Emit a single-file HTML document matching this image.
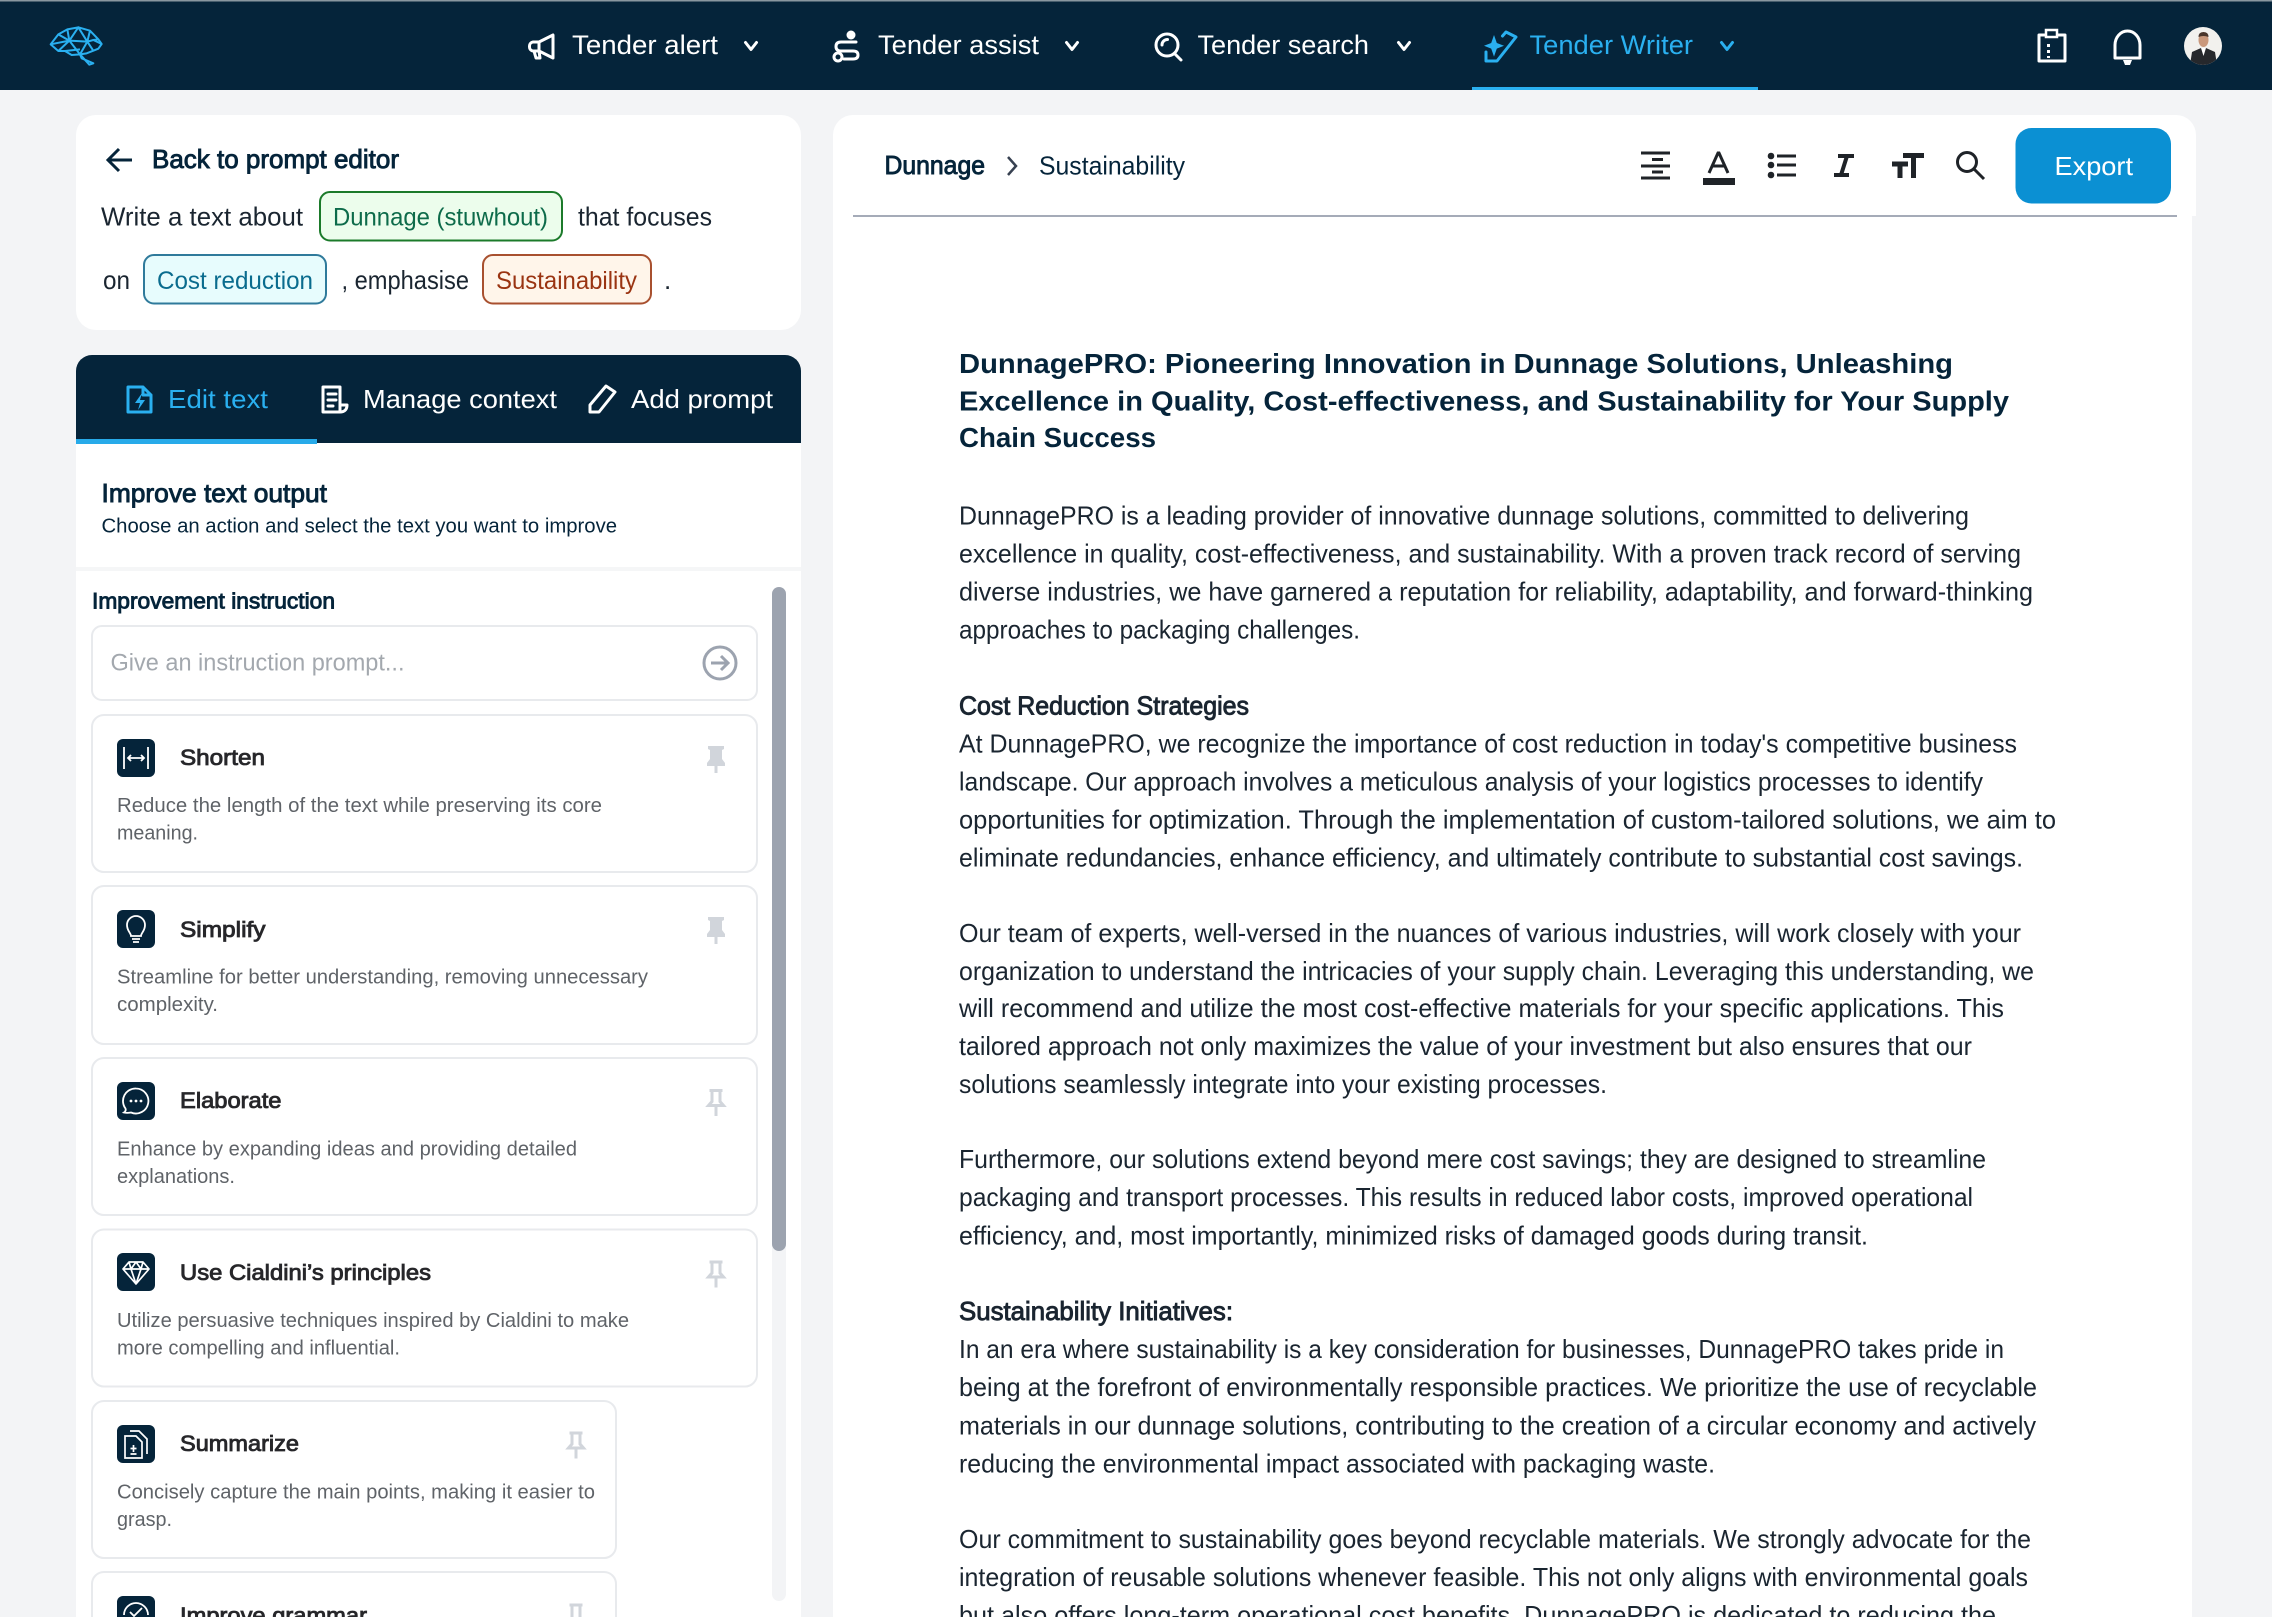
<!DOCTYPE html>
<html lang="en"><head><meta charset="utf-8"><title>Tender Writer</title>
<style>
html,body{margin:0;padding:0;background:#f3f4f6;overflow:hidden}
svg{display:block}
text{font-family:"Liberation Sans",sans-serif}
.b{font-size:26px;fill:#1a2530}
.m{stroke:currentColor;stroke-width:.9}
.d{font-size:20px;fill:#5f6368}
.t{font-size:22px;fill:#27272a;stroke:#27272a;stroke-width:.85}
.n{font-size:27px;fill:#fff}
.ic{fill:none;stroke:#fff;stroke-width:3;stroke-linejoin:round;stroke-linecap:round}
.bl{fill:none;stroke:#2ab0f0;stroke-width:3;stroke-linejoin:round;stroke-linecap:round}
.pin{fill:#d1d5db}
.pino{fill:none;stroke:#d1d5db;stroke-width:3}
.card{fill:#fff;stroke:#e8eaed;stroke-width:2}
.tb{fill:none;stroke:#1f2328;stroke-width:3}
</style></head><body>
<svg width="2272" height="1617" viewBox="0 0 2272 1617" xmlns="http://www.w3.org/2000/svg">
<defs><clipPath id="av"><circle cx="2203" cy="46" r="19"/></clipPath></defs>
<rect width="2272" height="1617" fill="#f3f4f6"/>
<!-- header -->
<rect width="2272" height="90" fill="#05243a"/>
<rect width="2272" height="1.500" fill="#8a97a0"/>
<g transform="translate(30 0) scale(.3333)" fill="none" stroke="#2ab0f0" stroke-width="6" stroke-linejoin="round">
<path d="M62 133L85 103L112 88L145 82L180 92L205 118L215 132L205 146L190 152L170 160L150 163L155 175L190 190L178 194L150 163L125 165L105 153L85 153Z"/>
<path d="M62 133L118 122L85 103M118 122L112 88M118 122L145 82L172 125L180 92M118 122L172 125L190 120L205 118M118 122L150 163L172 125L190 152M118 122L85 153M190 120L215 132M105 153L150 148"/>
</g>
<path class="ic" d="M533 42h6l14-7v23l-14-7h-6a4 4 0 0 1-3.500-4v-1a4 4 0 0 1 3.500-4zM539 42v9M534 51l2 7h4l-1-7"/>
<text class="n" x="572" y="54" textLength="146" lengthAdjust="spacingAndGlyphs">Tender alert</text>
<path class="ic" stroke-width="2.600" d="M745.500 42.500l5.500 7 5.500-7"/>
<circle cx="851" cy="35" r="4.500" fill="#fff"/><circle cx="838" cy="57" r="4" class="ic"/>
<path class="ic" d="M856 42h-15q-5 0-5 4.500t5 4.500h12q5 0 5 4t-5 4h-9"/>
<text class="n" x="878" y="54" textLength="161" lengthAdjust="spacingAndGlyphs">Tender assist</text>
<path class="ic" stroke-width="2.600" d="M1066.500 42.500l5.500 7 5.500-7"/>
<circle class="ic" cx="1167" cy="45" r="11"/><path class="ic" d="M1175 54l6 6M1162 45a5.500 5.500 0 0 1 5.500-5.500"/>
<text class="n" x="1197.500" y="54" textLength="171.500" lengthAdjust="spacingAndGlyphs">Tender search</text>
<path class="ic" stroke-width="2.600" d="M1398.500 42.500l5.500 7 5.500-7"/>
<path class="bl" d="M1486 52v9h11l19-24-10-5-3.500 4"/>
<path d="M1494 35l2.800 8 7.200 2.800-7.200 2.800-2.800 8-2.800-8-7.200-2.800 7.200-2.800z" fill="#2ab0f0"/>
<text class="n" style="fill:#2ab0f0" x="1529.500" y="54" textLength="163.500" lengthAdjust="spacingAndGlyphs">Tender Writer</text>
<path class="bl" stroke-width="2.600" d="M1721.500 42.500l5.500 7 5.500-7"/>
<rect x="1472" y="87" width="286" height="3" fill="#2ab0f0"/>
<rect class="ic" x="2039" y="35" width="26" height="26"/><rect x="2046" y="30" width="11" height="7" fill="#05243a" stroke="#fff" stroke-width="2.500"/>
<path d="M2047 44h3v3h-3zM2047 50h3v3h-3zM2047 56h3v2h-3z" fill="#fff"/>
<path class="ic" d="M2115 58V45a12.500 14 0 0 1 25 0V58z"/><path d="M2123 60h9l-2 5h-5z" fill="#fff"/>
<g clip-path="url(#av)"><rect x="2184" y="27" width="38" height="38" fill="#f2f1ee"/>
<path d="M2190 65l2-13 9-4h5l9 4 2 13z" fill="#26282c"/><path d="M2201 48l2.500 8 2.500-8z" fill="#fff"/>
<ellipse cx="2203.500" cy="40" rx="5" ry="7" fill="#c9987c"/><path d="M2198.500 37q0-5 5-5t5 5q-5-2-10 0z" fill="#4a362c"/></g>
<!-- prompt card -->
<rect x="76" y="115" width="725" height="215" rx="20" fill="#fff"/>
<path d="M132 160H109M119 149l-11 11 11 11" fill="none" stroke="#05243a" stroke-width="3"/>
<text x="152" y="168" font-size="26" fill="#05243a" style="color:#05243a" class="m" textLength="247" lengthAdjust="spacingAndGlyphs">Back to prompt editor</text>
<text class="b" x="101" y="225.500" textLength="202" lengthAdjust="spacingAndGlyphs">Write a text about</text>
<rect x="320" y="192" width="242" height="48.500" rx="10" fill="#ecfdec" stroke="#1b7a2a" stroke-width="2"/>
<text x="333" y="225.500" font-size="25" fill="#0d6b4a" textLength="215" lengthAdjust="spacingAndGlyphs">Dunnage (stuwhout)</text>
<text class="b" x="578" y="225.500" textLength="134" lengthAdjust="spacingAndGlyphs">that focuses</text>
<text class="b" x="103" y="289" textLength="27" lengthAdjust="spacingAndGlyphs">on</text>
<rect x="144" y="255" width="182" height="48.500" rx="10" fill="#e7fcfd" stroke="#2f7a9b" stroke-width="2"/>
<text x="157" y="289" font-size="25" fill="#0a6c8e" textLength="156" lengthAdjust="spacingAndGlyphs">Cost reduction</text>
<text class="b" x="341.500" y="289" textLength="127.500" lengthAdjust="spacingAndGlyphs">, emphasise</text>
<rect x="483" y="255" width="168" height="48.500" rx="10" fill="#fff5ea" stroke="#a8502f" stroke-width="2"/>
<text x="496" y="289" font-size="25" fill="#9a3412" textLength="141" lengthAdjust="spacingAndGlyphs">Sustainability</text>
<text class="b" x="664" y="289">.</text>
<!-- tabs panel -->
<rect x="76" y="420" width="725" height="1197" fill="#fff"/>
<path d="M76 443V371a16 16 0 0 1 16-16H785a16 16 0 0 1 16 16V443z" fill="#05243a"/>
<rect x="76" y="439" width="241" height="5" fill="#27aae9"/>
<path class="bl" d="M128 387h15l8 8v17h-23zM143 387v8h8"/><path d="M142 393l-7 10h5l-2 7 7-10h-5z" fill="#2ab0f0"/>
<text x="168" y="408" font-size="26" fill="#2ab0f0" textLength="100" lengthAdjust="spacingAndGlyphs">Edit text</text>
<path class="ic" d="M323 387h17v25h-17zM340 405h7c0 4-2 7-7 7M328 394h8M328 400h8M328 406h5"/>
<text x="363" y="408" font-size="26" fill="#fff" textLength="194" lengthAdjust="spacingAndGlyphs">Manage context</text>
<path class="ic" d="M590 412v-7l16-19 9 6-16 20z"/>
<text x="631" y="408" font-size="26" fill="#fff" textLength="142" lengthAdjust="spacingAndGlyphs">Add prompt</text>
<text x="101.500" y="502" font-size="26" fill="#05243a" style="color:#05243a" class="m" textLength="225.500" lengthAdjust="spacingAndGlyphs">Improve text output</text>
<text x="101.500" y="532.500" font-size="20" fill="#05243a" textLength="515.500" lengthAdjust="spacingAndGlyphs">Choose an action and select the text you want to improve</text>
<rect x="76" y="567" width="725" height="4" fill="#f5f6f7"/>
<text x="92" y="608.500" font-size="22" fill="#05243a" style="color:#05243a" class="m" textLength="243" lengthAdjust="spacingAndGlyphs">Improvement instruction</text>
<rect x="772" y="587" width="14" height="1014" rx="7" fill="#f3f4f6"/>
<rect x="772" y="587" width="14" height="664" rx="7" fill="#9ca3af"/>
<rect class="card" x="92" y="626" width="665" height="74" rx="10"/>
<text x="110.500" y="670.500" font-size="24" fill="#a3a8ae" textLength="294" lengthAdjust="spacingAndGlyphs">Give an instruction prompt...</text>
<circle cx="720" cy="663" r="16" fill="none" stroke="#9ca3af" stroke-width="3"/>
<path d="M711 663h17M721 656l7 7-7 7" fill="none" stroke="#9ca3af" stroke-width="3"/>
<!-- cards -->
<rect class="card" x="92" y="715" width="665" height="157" rx="12"/>
<rect x="117" y="739" width="38" height="38" rx="6" fill="#05243a"/>
<path d="M124 747v22M148 747v22" stroke="#fff" stroke-width="1.800"/><path d="M128 758h16M131 755l-3 3 3 3M141 755l3 3-3 3" fill="none" stroke="#fff" stroke-width="1.800"/>
<text class="t" x="180" y="765" textLength="85" lengthAdjust="spacingAndGlyphs">Shorten</text>
<path class="pin" d="M708 746h16v3l-2 1v9l3 4v3h-7.500v7h-3v-7h-7.500v-3l3-4v-9l-2-1z"/>
<text class="d" x="117" y="812" textLength="485" lengthAdjust="spacingAndGlyphs">Reduce the length of the text while preserving its core</text>
<text class="d" x="117" y="839.500" textLength="81" lengthAdjust="spacingAndGlyphs">meaning.</text>

<rect class="card" x="92" y="886" width="665" height="158" rx="12"/>
<rect x="117" y="910" width="38" height="38" rx="6" fill="#05243a"/>
<path d="M131 936c0-3-4-5-4-11a9 9 0 0 1 18 0c0 6-4 8-4 11z" fill="none" stroke="#fff" stroke-width="1.800"/><path d="M132 939h8M133 942h6" stroke="#fff" stroke-width="1.800"/>
<text class="t" x="180" y="937" textLength="85.500" lengthAdjust="spacingAndGlyphs">Simplify</text>
<path class="pin" d="M708 917h16v3l-2 1v9l3 4v3h-7.500v7h-3v-7h-7.500v-3l3-4v-9l-2-1z"/>
<text class="d" x="117" y="983.500" textLength="531" lengthAdjust="spacingAndGlyphs">Streamline for better understanding, removing unnecessary</text>
<text class="d" x="117" y="1011" textLength="101" lengthAdjust="spacingAndGlyphs">complexity.</text>

<rect class="card" x="92" y="1058" width="665" height="157" rx="12"/>
<rect x="117" y="1082" width="38" height="38" rx="6" fill="#05243a"/>
<path d="M136 1088.500a12.500 12.500 0 1 1-5 24c-3 .5-5 .5-7 0 1.500-1 2-2.500 1.500-4a12.500 12.500 0 0 1 10.500-20z" fill="none" stroke="#fff" stroke-width="1.800"/><circle cx="131" cy="1101" r="1.400" fill="#fff"/><circle cx="136" cy="1101" r="1.400" fill="#fff"/><circle cx="141" cy="1101" r="1.400" fill="#fff"/>
<text class="t" x="180" y="1108" textLength="101.500" lengthAdjust="spacingAndGlyphs">Elaborate</text>
<path class="pino" d="M709.500 1090.500h13M712 1090.500v11l-3.500 4h15l-3.500-4v-11M716 1105.500v10.500"/>
<text class="d" x="117" y="1155.500" textLength="460" lengthAdjust="spacingAndGlyphs">Enhance by expanding ideas and providing detailed</text>
<text class="d" x="117" y="1183" textLength="118" lengthAdjust="spacingAndGlyphs">explanations.</text>

<rect class="card" x="92" y="1229.500" width="665" height="157" rx="12"/>
<rect x="117" y="1253" width="38" height="38" rx="6" fill="#05243a"/>
<path d="M129 1262h14l6 7-13 15-13-15zM123 1269h26M131 1269l5 15 5-15M129 1262l2 7 5-7 5 7 2-7" fill="none" stroke="#fff" stroke-width="1.700" stroke-linejoin="round"/>
<text class="t" x="180" y="1280" textLength="251" lengthAdjust="spacingAndGlyphs">Use Cialdini’s principles</text>
<path class="pino" d="M709.500 1262h13M712 1262v11l-3.500 4h15l-3.500-4v-11M716 1277v10.500"/>
<text class="d" x="117" y="1327" textLength="512" lengthAdjust="spacingAndGlyphs">Utilize persuasive techniques inspired by Cialdini to make</text>
<text class="d" x="117" y="1354.500" textLength="283" lengthAdjust="spacingAndGlyphs">more compelling and influential.</text>

<rect class="card" x="92" y="1401" width="524" height="157" rx="12"/>
<rect x="117" y="1425" width="38" height="38" rx="6" fill="#05243a"/>
<path d="M125 1436h11l6 6v16h-17zM130 1431h9l8 8v15M133.500 1445v7M130.500 1448.500h6M130.500 1454h6" fill="none" stroke="#fff" stroke-width="1.700"/>
<text class="t" x="180" y="1451" textLength="119" lengthAdjust="spacingAndGlyphs">Summarize</text>
<path class="pino" d="M569.500 1433h13M572 1433v11l-3.500 4h15l-3.500-4v-11M576 1448v10.500"/>
<text class="d" x="117" y="1498.500" textLength="478" lengthAdjust="spacingAndGlyphs">Concisely capture the main points, making it easier to</text>
<text class="d" x="117" y="1526" textLength="55" lengthAdjust="spacingAndGlyphs">grasp.</text>

<path class="card" d="M92 1617V1584a12 12 0 0 1 12-12H604a12 12 0 0 1 12 12V1617"/>
<path d="M117 1617V1602a6 6 0 0 1 6-6h26a6 6 0 0 1 6 6V1617z" fill="#05243a"/>
<path d="M124 1615a12 12 0 0 1 24 0M130 1612l4 4 8-8" fill="none" stroke="#fff" stroke-width="1.800"/>
<text class="t" x="180" y="1623" textLength="187" lengthAdjust="spacingAndGlyphs">Improve grammar</text>
<path class="pino" d="M569.500 1605h13M572 1605v12M580 1605v12"/>

<!-- right document -->
<path d="M833 1617V135a20 20 0 0 1 20-20H2176a20 20 0 0 1 20 20V216h-4V1617z" fill="#fff"/>
<text x="884.500" y="174" font-size="26" fill="#05243a" style="color:#05243a" class="m" textLength="100.500" lengthAdjust="spacingAndGlyphs">Dunnage</text>
<path d="M1008 157l8 9-8 9" fill="none" stroke="#374151" stroke-width="2.500"/>
<text x="1039" y="174.500" font-size="26" fill="#05243a" textLength="146" lengthAdjust="spacingAndGlyphs">Sustainability</text>
<rect x="853" y="215" width="1324" height="2" fill="#a5abb8"/>
<path class="tb" d="M1641 153h29M1652 159.500h11M1641 166h29M1652 172h11M1641 178h29"/>
<path class="tb" d="M1709 173l9-20h1l9 20M1712 166h13"/><rect x="1703" y="178" width="32" height="7" fill="#1f2328"/>
<circle cx="1771" cy="156" r="3.300" fill="#1f2328"/><circle cx="1771" cy="165" r="3.300" fill="#1f2328"/><circle cx="1771" cy="175" r="3.300" fill="#1f2328"/>
<path class="tb" d="M1777 156h19M1777 165h19M1777 175h19"/>
<path d="M1838 156h16M1834 175h15M1847 156l-6 19" fill="none" stroke="#1f2328" stroke-width="4"/>
<path d="M1903 155.500h21M1913.500 155v23M1892 164h16M1900 164v14" fill="none" stroke="#1f2328" stroke-width="5"/>
<circle class="tb" cx="1967" cy="162" r="9.500"/><path class="tb" d="M1974 169l10 10"/>
<rect x="2015.500" y="128" width="155.500" height="75.500" rx="16" fill="#0b90d3"/>
<text x="2054.500" y="175" font-size="26" fill="#fff" textLength="78.500" lengthAdjust="spacingAndGlyphs">Export</text>
<!-- article -->
<g font-size="28" font-weight="700" fill="#05243a">
<text x="959" y="373" textLength="994" lengthAdjust="spacingAndGlyphs">DunnagePRO: Pioneering Innovation in Dunnage Solutions, Unleashing</text>
<text x="959" y="410.500" textLength="1050" lengthAdjust="spacingAndGlyphs">Excellence in Quality, Cost-effectiveness, and Sustainability for Your Supply</text>
<text x="959" y="447" textLength="197" lengthAdjust="spacingAndGlyphs">Chain Success</text>
</g>
<g class="b">
<text x="959" y="524.500" textLength="1010" lengthAdjust="spacingAndGlyphs">DunnagePRO is a leading provider of innovative dunnage solutions, committed to delivering</text>
<text x="959" y="562.500" textLength="1062" lengthAdjust="spacingAndGlyphs">excellence in quality, cost-effectiveness, and sustainability. With a proven track record of serving</text>
<text x="959" y="600.500" textLength="1074" lengthAdjust="spacingAndGlyphs">diverse industries, we have garnered a reputation for reliability, adaptability, and forward-thinking</text>
<text x="959" y="638.500" textLength="401" lengthAdjust="spacingAndGlyphs">approaches to packaging challenges.</text>
<text x="959" y="714.500" textLength="290" lengthAdjust="spacingAndGlyphs" style="color:#1a2530" class="m">Cost Reduction Strategies</text>
<text x="959" y="752.500" textLength="1058" lengthAdjust="spacingAndGlyphs">At DunnagePRO, we recognize the importance of cost reduction in today's competitive business</text>
<text x="959" y="790.500" textLength="1024" lengthAdjust="spacingAndGlyphs">landscape. Our approach involves a meticulous analysis of your logistics processes to identify</text>
<text x="959" y="828.500" textLength="1097" lengthAdjust="spacingAndGlyphs">opportunities for optimization. Through the implementation of custom-tailored solutions, we aim to</text>
<text x="959" y="866.500" textLength="1064" lengthAdjust="spacingAndGlyphs">eliminate redundancies, enhance efficiency, and ultimately contribute to substantial cost savings.</text>
<text x="959" y="942" textLength="1062" lengthAdjust="spacingAndGlyphs">Our team of experts, well-versed in the nuances of various industries, will work closely with your</text>
<text x="959" y="980" textLength="1075" lengthAdjust="spacingAndGlyphs">organization to understand the intricacies of your supply chain. Leveraging this understanding, we</text>
<text x="959" y="1017" textLength="1045" lengthAdjust="spacingAndGlyphs">will recommend and utilize the most cost-effective materials for your specific applications. This</text>
<text x="959" y="1055" textLength="1013" lengthAdjust="spacingAndGlyphs">tailored approach not only maximizes the value of your investment but also ensures that our</text>
<text x="959" y="1093" textLength="648" lengthAdjust="spacingAndGlyphs">solutions seamlessly integrate into your existing processes.</text>
<text x="959" y="1168" textLength="1027" lengthAdjust="spacingAndGlyphs">Furthermore, our solutions extend beyond mere cost savings; they are designed to streamline</text>
<text x="959" y="1206" textLength="1014" lengthAdjust="spacingAndGlyphs">packaging and transport processes. This results in reduced labor costs, improved operational</text>
<text x="959" y="1244.500" textLength="909" lengthAdjust="spacingAndGlyphs">efficiency, and, most importantly, minimized risks of damaged goods during transit.</text>
<text x="959" y="1320" textLength="274" lengthAdjust="spacingAndGlyphs" style="color:#1a2530" class="m">Sustainability Initiatives:</text>
<text x="959" y="1358" textLength="1045" lengthAdjust="spacingAndGlyphs">In an era where sustainability is a key consideration for businesses, DunnagePRO takes pride in</text>
<text x="959" y="1396" textLength="1078" lengthAdjust="spacingAndGlyphs">being at the forefront of environmentally responsible practices. We prioritize the use of recyclable</text>
<text x="959" y="1434.500" textLength="1077" lengthAdjust="spacingAndGlyphs">materials in our dunnage solutions, contributing to the creation of a circular economy and actively</text>
<text x="959" y="1472.500" textLength="756" lengthAdjust="spacingAndGlyphs">reducing the environmental impact associated with packaging waste.</text>
<text x="959" y="1548" textLength="1072" lengthAdjust="spacingAndGlyphs">Our commitment to sustainability goes beyond recyclable materials. We strongly advocate for the</text>
<text x="959" y="1586" textLength="1069" lengthAdjust="spacingAndGlyphs">integration of reusable solutions whenever feasible. This not only aligns with environmental goals</text>
<text x="959" y="1624" textLength="1037" lengthAdjust="spacingAndGlyphs">but also offers long-term operational cost benefits. DunnagePRO is dedicated to reducing the</text>
</g>
</svg>
</body></html>
